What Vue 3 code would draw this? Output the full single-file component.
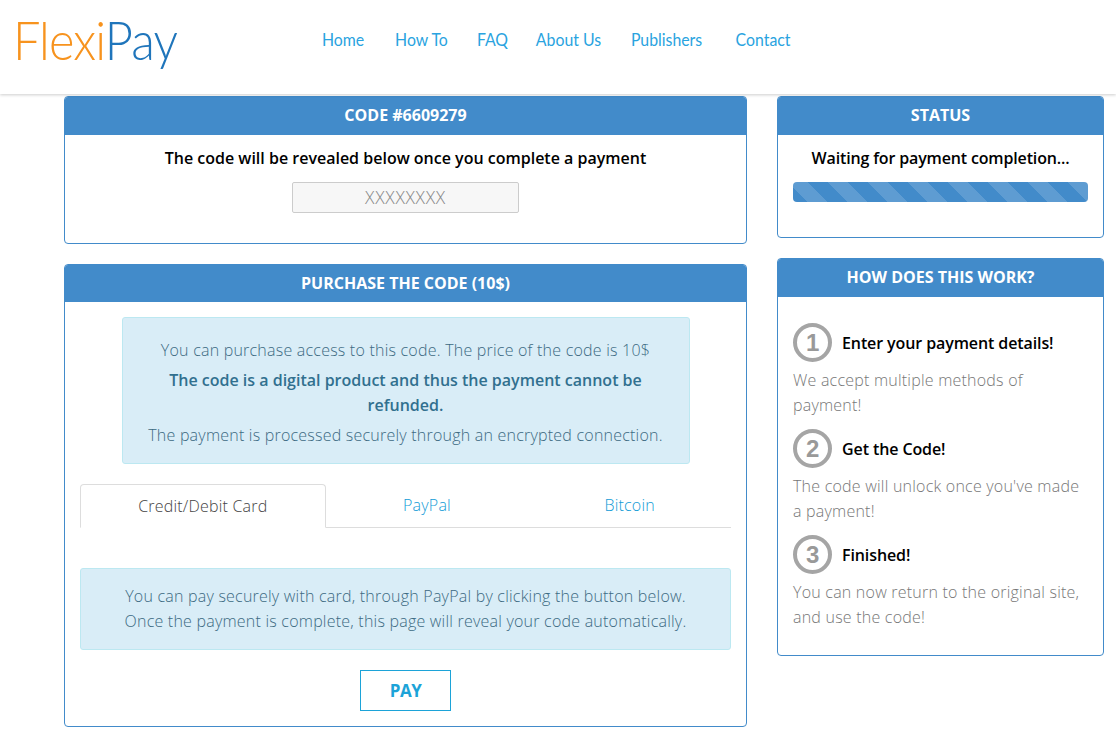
<script setup>
const nav = ['Home', 'How To', 'FAQ', 'About Us', 'Publishers', 'Contact']
const steps = [
  { n: 1, t: 'Enter your payment details!', d: 'We accept multiple methods of payment!' },
  { n: 2, t: 'Get the Code!', d: "The code will unlock once you've made a payment!" },
  { n: 3, t: 'Finished!', d: 'You can now return to the original site, and use the code!' }
]
</script>

<template>
  <div class="page">
    <header class="top">
      <div class="logo"><div class="logo-in"><span class="flexi">Flexi</span><span class="pay">Pay</span></div></div>
      <nav class="nav"><a v-for="n in nav" :key="n">{{ n }}</a></nav>
    </header>
    <main class="main">
      <div class="left">
        <section class="card c1">
          <h3 class="head">CODE #6609279</h3>
          <div class="c1-body">
            <p class="strong">The code will be revealed below once you complete a payment</p>
            <div class="code">XXXXXXXX</div>
          </div>
        </section>
        <section class="card c2">
          <h3 class="head h2">PURCHASE THE CODE (10$)</h3>
          <div class="c2-body">
            <div class="alert a1">
              <p>You can purchase access to this code. The price of the code is 10$</p>
              <p class="bold">The code is a digital product and thus the payment cannot be refunded.</p>
              <p>The payment is processed securely through an encrypted connection.</p>
            </div>
            <div class="tabs">
              <div class="tab active">Credit/Debit Card</div>
              <div class="tab">PayPal</div>
              <div class="tab">Bitcoin</div>
            </div>
            <div class="alert a2">
              You can pay securely with card, through PayPal by clicking the button below.<br />
              Once the payment is complete, this page will reveal your code automatically.
            </div>
            <div class="pay-row"><button class="btn">PAY</button></div>
          </div>
        </section>
      </div>
      <div class="right">
        <section class="card s1">
          <h3 class="head">STATUS</h3>
          <div class="s1-body">
            <p class="strong tight">Waiting for payment completion...</p>
            <div class="bar"></div>
          </div>
        </section>
        <section class="card s2">
          <h3 class="head">HOW DOES THIS WORK?</h3>
          <div class="s2-body">
            <div v-for="s in steps" :key="s.n" class="step">
              <div class="step-t"><span class="num">{{ s.n }}</span><b>{{ s.t }}</b></div>
              <p class="step-d">{{ s.d }}</p>
            </div>
          </div>
        </section>
      </div>
    </main>
  </div>
</template>

<style>
body { margin: 0; background: #fff; }
</style>

<style scoped>
.page { width: 1116px; height: 742px; overflow: hidden; font-family: "Open Sans", "Lato", sans-serif; color: #000; }
p, h3 { margin: 0; }
.top { height: 94px; display: flex; background: #fff; box-shadow: 0 1px 3px rgba(0,0,0,.2); position: relative; z-index: 1; }
.logo { width: 322px; box-sizing: border-box; padding: 9px 0 0 13px; font-family: "Lato", sans-serif; font-weight: 300; font-size: 53px; line-height: 62px; letter-spacing: -1px; }
.logo-in { transform: scaleX(.92); transform-origin: left center; white-space: nowrap; }
.flexi { color: #f7931e; }
.pay { color: #1f75bb; }
.nav { display: grid; grid-template-columns: 83px 93px 67px 108px 119px auto; padding-top: 27px; height: 24px; font-family: "Lato", sans-serif; font-size: 18px; line-height: 24px; font-weight: 400; color: #29a3e0; transform: scaleX(.88); transform-origin: left top; }
.main { display: flex; gap: 30px; padding: 2px 0 0 64px; }
.left { width: 683px; }
.right { width: 327px; }
.card { box-sizing: border-box; border: 1px solid #428bca; border-radius: 4px; background: #fff; margin-bottom: 20px; overflow: hidden; }
.head { background: #428bca; color: #fff; height: 38px; line-height: 36px; text-align: center; font-size: 16px; font-weight: 700; }
.h2 { height: 37px; line-height: 36px; }
.strong { font-size: 16px; font-weight: 600; line-height: 20px; text-align: center; }
.tight { letter-spacing: -.15px; }
.c1 { height: 148px; }
.c1-body { padding-top: 13px; }
.code { box-sizing: border-box; width: 227px; height: 31px; margin: 14px auto 0; border: 1px solid #ccc; border-radius: 2px; background: #f7f7f7; color: #888; font-size: 17.5px; font-weight: 300; letter-spacing: .7px; line-height: 29px; text-align: center; }
.c2 { height: 463px; }
.c2-body { padding: 15px 15px 0; }
.alert { box-sizing: border-box; background: #d9edf7; border: 1px solid #bce8f1; border-radius: 3px; color: #3c6a82; font-size: 16px; font-weight: 300; letter-spacing: .22px; text-align: center; }
.a1 { width: 568px; height: 147px; margin: 0 auto; padding: 20px 20px 0; line-height: 25px; }
.a1 p + p { margin-top: 5px; }
.a1 .bold { font-weight: 600; letter-spacing: 0; margin-bottom: 5px; color: #31708f; }
.tabs { display: flex; margin-top: 20px; height: 44px; box-sizing: border-box; border-bottom: 1px solid #ddd; }
.tab { width: 203px; height: 44px; line-height: 42px; text-align: center; font-size: 16px; font-weight: 300; letter-spacing: .2px; color: #129bd6; }
.tab.active { box-sizing: border-box; width: 246px; color: #444; background: #fff; border: 1px solid #ddd; border-bottom-color: #fff; border-radius: 4px 4px 0 0; }
.a2 { height: 82px; margin-top: 40px; padding-top: 15px; line-height: 25px; }
.pay-row { display: flex; justify-content: center; margin-top: 20px; }
.btn { width: 91px; height: 41px; background: #fff; border: 1px solid #1ca3d8; color: #1ca3d8; font: 700 17px "Open Sans", sans-serif; letter-spacing: -.5px; padding: 0; }
.s1 { height: 142px; }
.s1-body { padding: 13px 15px 0; }
.bar { height: 20px; margin-top: 14px; border-radius: 4px; background-color: #428bca; background-image: linear-gradient(45deg, rgba(255,255,255,.15) 25%, transparent 25%, transparent 50%, rgba(255,255,255,.15) 50%, rgba(255,255,255,.15) 75%, transparent 75%, transparent); background-size: 40px 40px; background-position: -5px 0; }
.s2 { height: 398px; }
.s2-body { padding: 26px 15px 0; }
.step { margin-bottom: 11px; }
.step-t { display: flex; align-items: center; gap: 10px; font-size: 16px; height: 39px; letter-spacing: -.1px; }
.step-t b { font-weight: 600; }
.num { box-sizing: border-box; width: 39px; height: 39px; border: 4px solid #a5a5a5; border-radius: 50%; color: #999; font: 700 24px/31px "Liberation Sans", sans-serif; text-align: center; }
.step-d { color: #777; font-size: 16px; font-weight: 300; letter-spacing: .22px; line-height: 25px; margin-top: 6px; }
</style>
